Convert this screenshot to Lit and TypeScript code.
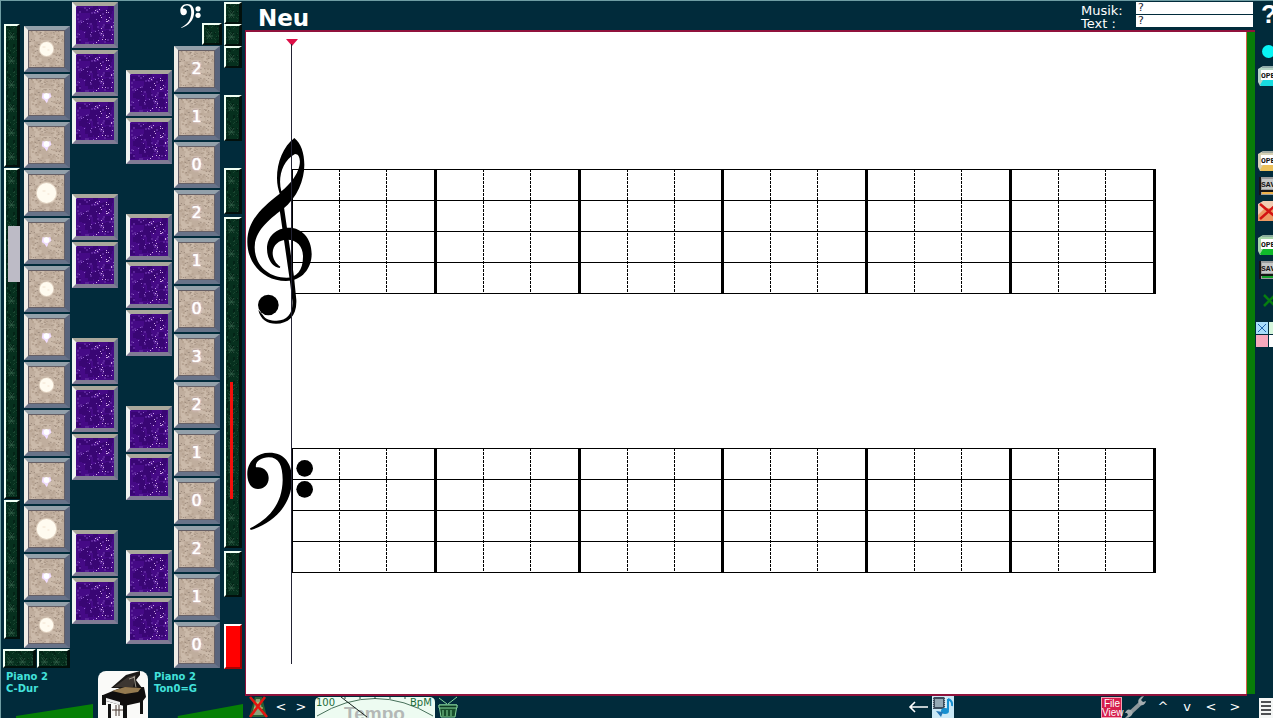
import { LitElement, html, css, svg, nothing } from "lit";
import { customElement } from "lit/decorators.js";

/** Deterministic grain: one path made of small squares. */
function grain(seed: number, count: number, w: number, h: number, size = 1): string {
  let s = seed;
  const next = () => (s = (s * 1103515245 + 12345) % 2147483648) / 2147483648;
  let d = "";
  for (let i = 0; i < count; i++) {
    const x = Math.floor(next() * (w - size + 1));
    const y = Math.floor(next() * (h - size + 1));
    d += `M${x} ${y}h${size}v${size}h${-size}z`;
  }
  return d;
}

const STONE = {
  light: grain(7, 40, 36, 36, 4),
  mid: grain(99, 60, 36, 36, 2),
  dark: grain(31, 60, 36, 36),
};
const VIOLET = {
  deep: grain(5, 50, 38, 38, 5),
  glow: grain(17, 36, 38, 38, 2),
  star: grain(73, 18, 38, 38),
  right: grain(41, 26, 18, 34),
};
const MOSS = {
  light: grain(12, 22, 12, 24),
  dark: grain(44, 20, 12, 24, 2),
};

const stone = svg`<rect width="36" height="36" fill="#c0ae9e"/>
  <path d=${STONE.light} fill="#cbbaaa"/><path d=${STONE.mid} fill="#b7a493"/>
  <path d=${STONE.dark} fill="#9a897c"/>`;
const violet = svg`<rect width="38" height="38" fill="#450a86"/>
  <path d=${VIOLET.deep} fill="#390674"/><path d=${VIOLET.glow} fill="#5a2398"/>
  <path d=${VIOLET.star} fill="#8c5cc4"/>
  <path transform="translate(19 3)" d=${VIOLET.right} fill="#d0a8e6"/>`;

type Spot = "s" | "m" | "l";
const SPOTS: Spot[] = ["m", "s", "s", "l", "s", "m", "s", "m", "s", "s", "l", "s", "m"];
const DIGITS = ["2", "1", "0", "2", "1", "0", "3", "2", "1", "0", "2", "1", "0"];
const UPPER = [1, 1, 1, 0, 1, 1, 0, 1, 1, 1, 0, 1, 1];
const LOWER = [1, 1, 0, 1, 1, 1, 0, 1, 1, 0, 1, 1];

const bassShape = svg`<path d="M22 135C20 95 50 68 88 68C132 68 156 98 156 148C156 225 100 280 32 300L30 295C92 264 127 218 128 150C128 106 116 82 86 82C64 82 44 96 48 112C72 108 86 126 86 144C86 164 72 177 54 177C34 177 23 160 22 135Z"/>
  <circle cx="194" cy="115" r="25"/><circle cx="194" cy="178" r="25"/>`;

@customElement("moss-strip")
class MossStrip extends LitElement {
  static styles = css`
    :host {
      display: block;
      box-sizing: border-box;
      border: 2px solid;
      border-color: #f0fff4 #02100c #02100c #f0fff4;
      border-right-width: 3px;
      background: #06291f;
      overflow: hidden;
    }
    svg { display: block; width: 100%; height: 100%; }
  `;
  render() {
    return html`<svg aria-hidden="true">
      <defs><pattern id="m" width="12" height="24" patternUnits="userSpaceOnUse">
        <rect width="12" height="24" fill="#06301e"/>
        <path d=${MOSS.dark} fill="#032417"/><path d=${MOSS.light} fill="#1a4530"/>
        <path d="M3 7l5 7M8 7l-5 7M2 11h7" stroke="#34614a" stroke-width=".8"/>
      </pattern></defs>
      <rect width="100%" height="100%" fill="url(#m)"/></svg>`;
  }
}

@customElement("instrument-panel")
class InstrumentPanel extends LitElement {
  static styles = css`
    :host {
      display: flex;
      flex-direction: column;
      position: relative;
      min-height: 0;
      color: #43e2dc;
      font: bold 10px/12px "DejaVu Sans", sans-serif;
    }
    .board {
      display: grid;
      flex: none;
      grid-template-columns: 20px 48px 54px 48px 50px 18px;
      padding-left: 3px;
    }
    .col { display: flex; flex-direction: column; gap: 2px; }
    .strip { gap: 1px; padding: 23px 4px 0 0; position: relative; }
    .whites { padding-top: 25px; }
    .upper { padding-top: 1px; }
    .lower { padding-top: 69px; }
    .digits { padding-top: 45px; }
    .edge { position: relative; gap: 0; padding-top: 1px; }
    .key {
      flex: none;
      position: relative;
      box-sizing: border-box;
      width: 46px;
      height: 46px;
      padding: 0;
      border: 4px solid;
      font: 16px/38px "DejaVu Sans", sans-serif;
      color: #fff;
    }
    .key svg { display: block; width: 100%; height: 100%; }
    .stone { border-color: #93a0aa #59647c #687389 #f1ede6; border-right-width: 5px; }
    .stone .face { border: 1px solid #655f66; box-sizing: border-box; }
    .violet { border-color: #aaa89c #687089 #817b94 #f0f3f0; }
    .digit {
      position: absolute;
      inset: 0;
      text-align: center;
      text-shadow: 0 0 1px #fff, 0 0 3px #f3d3ea;
    }
    .rest { height: 46px; flex: none; }
    .h143 { height: 143px; }
    .h331 { height: 331px; }
    .h139 { height: 139px; }
    .h22 { height: 22px; }
    .h46 { height: 46px; }
    .space { height: 27px; flex: none; }
    .thin { height: 3px; flex: none; }
    .thumb {
      position: absolute;
      left: 4px;
      top: 225px;
      width: 12px;
      height: 56px;
      background: #bdbbc6;
      border: 0;
      padding: 0;
    }
    .level { position: absolute; left: 6px; top: 381px; width: 3px; height: 117px; background: #f2110c; }
    .stop {
      height: 45px;
      flex: none;
      padding: 0;
      border: 2px solid;
      border-color: #fff #900 #a00 #fff;
      background: #f00;
    }
    .edge moss-strip { flex: none; }
    .pair { position: absolute; top: 648px; left: 2px; display: flex; gap: 1px; }
    .pair moss-strip { width: 33px; height: 19px; }
    .side { position: absolute; left: 201px; top: 22px; width: 20px; height: 22px; }
    .clef { position: absolute; left: 177px; top: -4px; width: 24px; height: 32px; fill: #fff; }
    .foot {
      flex: 1;
      min-height: 0;
      display: grid;
      grid-template-columns: 92px 56px 1fr;
      grid-template-rows: minmax(0, 1fr);
      padding: 2px 0 0 5px;
      overflow: hidden;
    }
    .voice { display: flex; flex-direction: column; justify-content: space-between; }
    .voice p { margin: 0; }
    .wedge { display: block; width: 100%; height: 15px; }
    .piano { width: 50px; height: 48px; }
  `;

  private violetKey = (on: number) =>
    on
      ? html`<button class="key violet" aria-label="Halbton"><svg viewBox="0 0 38 38">${violet}</svg></button>`
      : html`<span class="rest"></span>`;

  private spot(kind: Spot) {
    if (kind === "s")
      return svg`<path d="M14 14l4 1 4-1 1 4-3 2-1 3-1 1-2-3-3-2z" fill="#f0dcff"/><circle cx="18" cy="17" r="3" fill="#fff"/>`;
    const r = kind === "l" ? 10 : 7;
    return svg`<circle cx="18" cy="18" r=${r + 1} fill="#eadccb" opacity=".7"/><circle cx="18" cy="18" r=${r} fill="#fffbf0"/>
      <path d="M14 16h3M19 19h2" stroke="#f2e2cf"/>`;
  }

  render() {
    return html`
      <div class="board">
        <div class="col strip">
          <moss-strip class="h143"></moss-strip>
          <moss-strip class="h331"></moss-strip>
          <moss-strip class="h139"></moss-strip>
          <button class="thumb" aria-label="Lage"></button>
        </div>
        <div class="col whites">
          ${SPOTS.map((k) => html`<button class="key stone" aria-label="Ton">
            <svg class="face" viewBox="0 0 36 36" preserveAspectRatio="none">${stone}${this.spot(k)}</svg></button>`)}
        </div>
        <div class="col upper">${UPPER.map(this.violetKey)}</div>
        <div class="col lower">${LOWER.map(this.violetKey)}</div>
        <div class="col digits">
          ${DIGITS.map((d) => html`<button class="key stone">
            <svg class="face" viewBox="0 0 36 36" preserveAspectRatio="none">${stone}</svg><span class="digit">${d}</span></button>`)}
        </div>
        <div class="col edge">
          <moss-strip class="h22"></moss-strip>
          <moss-strip class="h22"></moss-strip>
          <moss-strip class="h22"></moss-strip>
          <span class="space"></span>
          <moss-strip class="h46"></moss-strip>
          <span class="space"></span>
          <moss-strip class="h46"></moss-strip>
          <span class="thin"></span>
          <moss-strip class="h331"></moss-strip>
          <span class="thin"></span>
          <moss-strip class="h46"></moss-strip>
          <span class="space"></span>
          <button class="stop" aria-label="Stopp"></button>
          <span class="level"></span>
        </div>
      </div>
      <div class="pair"><moss-strip></moss-strip><moss-strip></moss-strip></div>
      <moss-strip class="side"></moss-strip>
      <svg class="clef" viewBox="0 0 232 310" aria-hidden="true">${bassShape}</svg>
      <div class="foot">
        <div class="voice">
          <p>Piano 2<br />C-Dur</p>
          <svg class="wedge" viewBox="0 0 92 15" preserveAspectRatio="none"><path d="M10 13L87 1V15H10z" fill="#068006"/></svg>
        </div>
        <svg class="piano" viewBox="0 0 50 48" aria-hidden="true">
          <rect width="50" height="60" rx="8" fill="#fafaf8"/>
          <path d="M13 17L28 4 42 0 42 4 38 9 44 17z" fill="#1b1917"/>
          <path d="M16 16L30 6 38 4 35 16z" fill="#3c3631"/>
          <path d="M36 5l2 12M31 8l6-2" stroke="#cfc8ba" stroke-width=".7"/>
          <path d="M5 24L22 17 46 16 48 26 44 31 26 35 8 30z" fill="#100e0e"/>
          <path d="M14 20L27 16 43 17 40 21 27 23z" fill="#957a50"/>
          <path d="M5 26L22 31 22 34 5 29z" fill="#eee"/>
          <path d="M4 24h4v10H4zM10 33h3v14h-3zM25 34h4v14h-4zM42 29h3v14h-3z" fill="#111"/>
          <path d="M14 39h11M18 34v11M21 34v11" stroke="#4b3b32"/>
        </svg>
        <div class="voice">
          <p>Piano 2<br />Ton0=G</p>
          <svg class="wedge" viewBox="0 0 92 15" preserveAspectRatio="none"><path d="M24 13L90 1V15H24z" fill="#068006"/></svg>
        </div>
      </div>`;
  }
}

@customElement("music-sheet")
class MusicSheet extends LitElement {
  static styles = css`
    :host { display: block; position: relative; background: #fff; padding: 137px 90px 0 45px; overflow: hidden; }
    .staff {
      position: relative;
      display: flex;
      height: 125px;
      margin-bottom: 154px;
      border-left: 2px solid #000;
      background: repeating-linear-gradient(#000 0 1px, transparent 1px 31px);
    }
    .bar { flex: 1; display: flex; border-right: 3px solid #000; }
    .beat {
      flex: 1;
      background: repeating-linear-gradient(#000 0 3px, transparent 3px 4px) right / 1px 100% no-repeat;
    }
    .beat:last-child { background: none; }
    .clef { position: absolute; left: -53px; width: 110px; }
    .treble { top: -39px; height: 200px; }
    .bass { top: -18px; height: 150px; }
    .cursor { position: absolute; left: 40px; top: 7px; width: 12px; bottom: 30px; }
    .cursor::before {
      content: "";
      position: absolute;
      left: 0;
      border: 6px solid transparent;
      border-top: 7px solid #dd1048;
      border-bottom: 0;
    }
    .cursor::after { content: ""; position: absolute; left: 5px; top: 5px; bottom: 0; width: 1px; background: #223; }
  `;
  private bars() {
    return [1, 2, 3, 4, 5, 6].map(
      () => html`<div class="bar"><i class="beat"></i><i class="beat"></i><i class="beat"></i></div>`
    );
  }
  render() {
    return html`
      <div class="staff">
        ${this.bars()}
        <svg class="clef treble" viewBox="0 0 330 600" aria-label="Violinschlüssel">
          <path d="M163 24C130 50 111 95 111 145C111 165 115 178 119 191C66 232 22 272 22 335C22 402 72 453 138 453C186 453 215 415 215 372C215 325 185 293 148 293C108 293 81 320 81 356C81 390 100 412 119 414L121 410C106 400 98 385 98 368C99 345 116 329 142 329C172 329 189 350 189 380C189 420 170 443 140 443C85 443 44 405 44 352C44 306 84 270 128 238C172 203 193 150 193 105C193 70 183 40 163 24ZM165 72C179 72 182 92 178 108C172 136 149 164 124 184C113 144 126 92 165 72Z" fill-rule="evenodd"/>
          <path d="M117 226L130 218L162 440L169 510C171 558 145 581 108 581C82 581 62 570 55 540L68 554C76 568 90 572 110 572C142 572 160 550 157 512L149 448Z"/>
          <circle cx="85" cy="525" r="31"/>
        </svg>
      </div>
      <div class="staff">
        ${this.bars()}
        <svg class="clef bass" viewBox="0 0 330 450" aria-label="Bassschlüssel">${bassShape}</svg>
      </div>
      <div class="cursor"></div>`;
  }
}

const folder = (word: string, tone: string, tint: string) => svg`
  <path d="M0 3L5 0H22V20H2L0 16z" fill=${tone}/><path d="M2 19L5 14H22V20H3z" fill=${tint}/>
  <path d="M4 1h12l3 4" fill="none" stroke="#6d8390"/><rect x="3" y="4" width="24" height="10" fill="#fff"/>
  <text x="3" y="12" class="tiny">${word}</text>`;
const disk = (word: string, tone: string) => svg`
  <path d="M1 1h22v18H3v-3H1z" fill="#9a9c9c"/><path d="M2 1v18M2 15h22" stroke="#151515" stroke-width="2" fill="none"/>
  <path d="M4 17h20" stroke=${tone} stroke-width="2"/><rect x="4" y="3" width="22" height="10" fill="#c5c7c6"/>
  <text x="3" y="11" class="tiny">${word}</text>`;

@customElement("tool-rail")
class ToolRail extends LitElement {
  static styles = css`
    :host { display: flex; flex-direction: column; align-items: flex-start; overflow: hidden; min-height: 0; padding-left: 3px; }
    button { display: block; flex: none; padding: 0; border: 0; background: none; color: #fff; }
    svg { display: block; width: 24px; height: 20px; }
    .tiny { font: bold 8px "Liberation Mono", monospace; fill: #141414; }
    .help { font: bold 26px/26px "Liberation Sans", sans-serif; height: 24px; margin: 0 0 20px 3px; }
    .section { display: flex; flex-direction: column; gap: 5px; }
    .files { gap: 8px; margin-bottom: 65px; }
    .gold { margin-bottom: 14px; }
    .green { margin-bottom: 11px; }
    .dot { width: 13px; height: 13px; border-radius: 50%; background: #08f5f5; margin-left: 4px; }
    .squares { display: grid; grid-template-columns: 12px 12px; gap: 1px; margin: 11px 0 0 -2px; }
    .squares svg { width: 12px; height: 12px; }
    .list { margin: auto 0 0 1px; }
  `;
  render() {
    const btn = (label: string, art: unknown) => html`<button aria-label=${label}><svg viewBox="0 0 24 20">${art}</svg></button>`;
    const sq = (bg: string, line: string | null) => html`<svg viewBox="0 0 12 12"><rect width="12" height="12" fill=${bg}/>${
      line ? svg`<path d="M2 2l8 8M10 2l-8 8" stroke=${line}/>` : nothing}</svg>`;
    return html`
      <button class="help">?</button>
      <div class="section files">
        <button class="dot" aria-label="Aufnahme"></button>
        ${btn("Laden", folder("OPEN", "#b4d5c5", "#18dce0"))}
      </div>
      <div class="section gold">
        ${btn("Stück öffnen", folder("OPEN", "#d6d1b5", "#ecc15a"))}
        ${btn("Stück speichern", disk("SAVE", "#edb24a"))}
        ${btn("Stück löschen", svg`<path d="M0 3L5 0H24V20H0z" fill="#f2ccb2"/><path d="M0 14L7 7H24V20H0z" fill="#ed9a64"/>
          <path d="M2 3L20 18M20 2L2 18" stroke="#d31313" stroke-width="2.5"/>`)}
      </div>
      <div class="section green">
        ${btn("Klang öffnen", folder("OPEN", "#a6d6a9", "#10b92b"))}
        ${btn("Klang speichern", disk("SAVE", "#16a12e"))}
      </div>
      ${btn("Klang löschen", svg`<path d="M6 4l11 11M17 4L6 15" stroke="#067d10" stroke-width="2.5"/>`)}
      <div class="squares">
        ${sq("#a8ddfa", "#2367b0")}${sq("#d5f6dc", null)}${sq("#f8a9bd", null)}${sq("#fff", null)}
      </div>
      <button class="list" aria-label="Liste"><svg viewBox="0 0 24 20"><rect width="24" height="20" fill="#f4f6f5"/>
        <path d="M2 4h10M14 4h10M2 8h10M14 8h10M2 12h10M14 12h10M2 16h10M14 16h10" stroke="#16181c" stroke-width="1.6"/></svg></button>`;
  }
}

@customElement("app-root")
class AppRoot extends LitElement {
  static styles = css`
    :host {
      display: grid;
      grid-template-columns: 244px minmax(0, 1fr) 18px;
      grid-template-rows: minmax(0, 1fr);
      height: 100vh;
      min-height: 700px;
      box-sizing: border-box;
      overflow: hidden;
      border: solid #6f9da3;
      border-width: 1px 0 0 1px;
      background: #012b3b;
      color: #fff;
      font: 13px/14px "DejaVu Sans", sans-serif;
    }
    .main { display: flex; flex-direction: column; min-width: 0; min-height: 0; }
    header { display: flex; justify-content: space-between; flex: none; height: 29px; padding: 1px 2px 0 13px; box-sizing: border-box; }
    h1 { margin: 0; font: bold 23px/32px "DejaVu Sans", sans-serif; }
    .fields { display: grid; grid-template-columns: 55px 117px; grid-auto-rows: 12px; row-gap: 1px; }
    .fields label { line-height: 18px; }
    .fields input {
      box-sizing: border-box;
      width: 100%;
      height: 12px;
      border: 0;
      padding: 0 2px;
      border-radius: 0;
      background: #fff;
      color: #223;
      font: 11px/12px "DejaVu Sans", sans-serif;
    }
    .body {
      flex: 1;
      min-height: 0;
      display: grid;
      grid-template-columns: 1fr 9px;
      border: solid #90123c;
      border-width: 2px 0 0 1px;
    }
    .stripe { background: #087c08; border-left: 1px solid #d4604a; box-sizing: border-box; }
    footer {
      display: flex;
      align-items: center;
      height: 24px;
      flex: none;
      box-sizing: border-box;
      margin-right: 8px;
      padding-left: 1px;
      border-top: 2px solid #90123c;
    }
    footer button { padding: 0; border: 0; background: none; color: #fff; height: 22px; width: 24px; flex: none; font: 13px/22px "DejaVu Sans", sans-serif; text-align: center; }
    footer svg { display: block; width: 24px; height: 22px; }
    .steps { display: flex; margin: 0 4px 0 1px; }
    .steps button { width: 20px; }
    .arrows { display: flex; margin-left: 3px; }
    .grow { flex: 1; }
    footer .gauge { width: 120px; margin-right: 1px; }
    .num { font: 10px "DejaVu Sans", sans-serif; fill: #1c6b3a; }
    .tempo { font: bold 19px "Liberation Sans", sans-serif; fill: #b4b8b6; }
    .file { font: 10px "Liberation Sans", sans-serif; fill: #fff; }
    .film { margin-right: 145px; }
  `;
  render() {
    const step = (s: string) => html`<button>${s}</button>`;
    return html`
      <instrument-panel></instrument-panel>
      <div class="main">
        <header>
          <h1>Neu</h1>
          <div class="fields">
            <label for="musik">Musik:</label><input id="musik" value="?" />
            <label for="text">Text :</label><input id="text" value="?" />
          </div>
        </header>
        <div class="body"><music-sheet></music-sheet><div class="stripe"></div></div>
        <footer>
          <button aria-label="Metronom aus"><svg viewBox="0 0 24 22">
            <path d="M9 1h7l5 20H3z" fill="#275e32"/><path d="M10 3h4l3 16H6z" fill="#8aa27a"/><path d="M9 7h6M8 12h9" stroke="#ded36a"/>
            <path d="M4 1L21 21M19 1L4 21" stroke="#e3150f" stroke-width="2.6"/></svg></button>
          <div class="steps">${step("<")}${step(">")}</div>
          <svg class="gauge" viewBox="0 0 120 22" role="img" aria-label="Tempo">
            <path d="M0 22V6Q0 1 6 1H114Q120 1 120 6V22z" fill="#edfbf1"/>
            <text class="tempo" x="29" y="24">Tempo</text>
            <path d="M2 20Q60-15 118 20" fill="none" stroke="#47705a"/>
            <path d="M26 1L52 21" stroke="#15201c"/>
            <path d="M30 1v2M45 1v2M60 1v2M75 1v2M90 1v2" stroke="#26463b"/>
            <text class="num" x="1" y="10">100</text><text class="num" x="95" y="10">BpM</text>
          </svg>
          <button aria-label="Trommel"><svg viewBox="0 0 24 22" fill="none" stroke="#86d69b">
            <path d="M3 9h18l-2 12H5z" fill="#174f2b"/><path d="M3 9h18v3H3z" fill="#0b3823"/>
            <path d="M3 2l8 6M21 1l-9 7M7 14v6M11 14v6M15 14v6"/></svg></button>
          <span class="grow"></span>
          <button class="goback" aria-label="Zurück"><svg viewBox="0 0 24 22" fill="none" stroke="#fff" stroke-width="1.6"><path d="M21 11H3M8 6l-5 5 5 5"/></svg></button>
          <button class="film" aria-label="Noten exportieren"><svg viewBox="0 0 24 22">
            <rect x="1" width="22" height="22" fill="#c9e8f6"/><rect x="2" y="1" width="12" height="12" fill="#3c4c5c"/>
            <rect x="4" y="3" width="8" height="8" fill="#94a8b4"/><path d="M2 1v12M14 1v12" stroke="#fff" stroke-dasharray="1 1"/>
            <path d="M17 3v11M17 3q5 2 4 7" fill="none" stroke="#168fd0" stroke-width="2"/><ellipse cx="14" cy="15" rx="4" ry="3" fill="#168fd0"/>
            <path d="M5 15l7 1-2 5z" fill="#2375b5"/></svg></button>
          <button aria-label="File View"><svg viewBox="0 0 24 22"><rect x="1" y="1" width="21" height="21" fill="#d51d4c"/>
            <rect x="1.5" y="1.5" width="20" height="20" fill="none" stroke="#f3a3b5"/>
            <text class="file" x="4" y="11">File</text><text class="file" x="2" y="20">View</text></svg></button>
          <button aria-label="Einstellungen"><svg viewBox="0 0 24 22"><path d="M5 18L18 6" stroke="#8d979b" stroke-width="4"/>
            <path d="M22 5q-1 5-6 4-3-3-1-6 2-3 5-3l-3 4 2 2zM1 17q2-5 6-3 3 3 0 6-2 2-6 2l3-3-1-2z" fill="#a5adb0"/></svg></button>
          <div class="arrows">${["^", "v", "<", ">"].map(step)}</div>
        </footer>
      </div>
      <tool-rail></tool-rail>`;
  }
}
